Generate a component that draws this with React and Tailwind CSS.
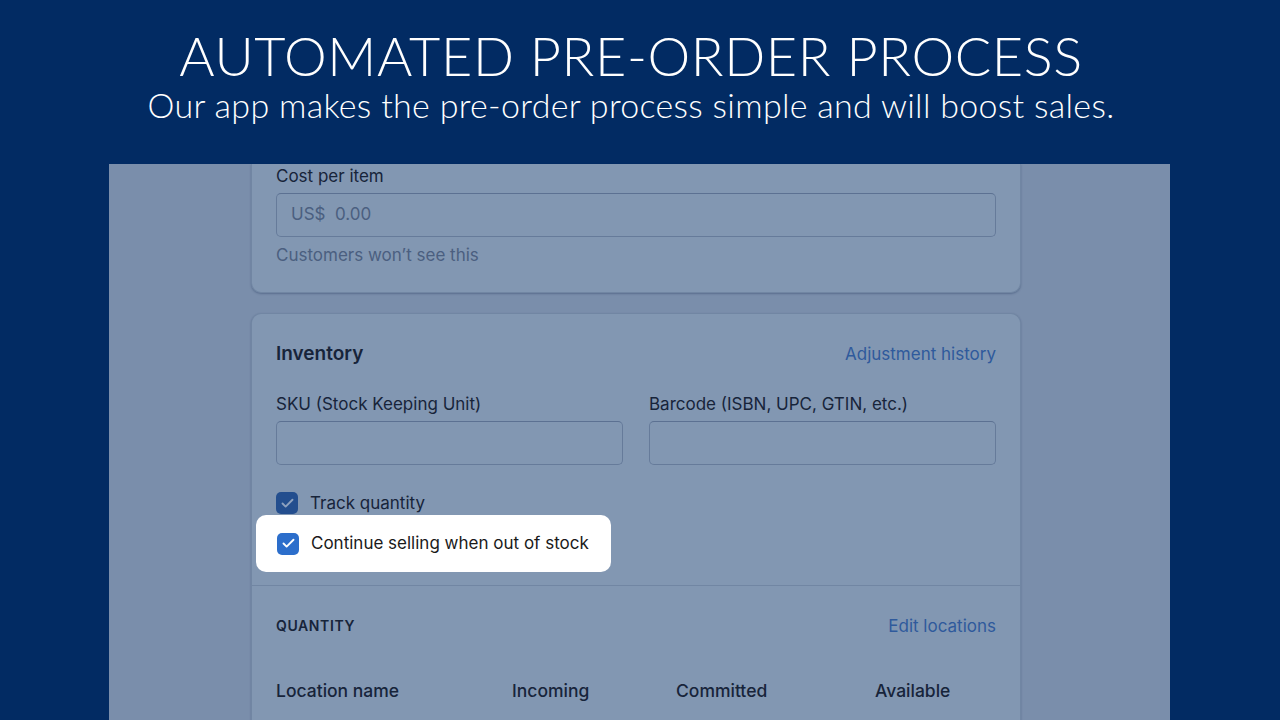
import { Check } from "lucide-react";

const ui = { fontFamily: "Inter, 'Noto Sans', sans-serif" };
const head = { fontFamily: "Lato, 'Open Sans', sans-serif" };

const Box = ({ checked = true, bright = false }) => (
  <span
    className={`w-[22px] h-[22px] rounded-[5px] flex items-center justify-center shrink-0 ${
      bright ? "bg-[#2c6ecb]" : "bg-[#234e8e]"
    }`}
  >
    {checked && <Check className={bright ? "text-white" : "text-[#8ea2bf]"} size={15} strokeWidth={3} />}
  </span>
);

const App = () => {
  return (
    <div className="w-[1280px] h-[720px] bg-[#022b63] overflow-hidden flex flex-col items-center" style={ui}>
      {/* Header */}
      <div className="h-[164px] mr-[18px] flex flex-col items-center text-white font-light" style={head}>
        <h1 className="text-[54px] leading-none mt-[29px] tracking-[0.6px]">AUTOMATED PRE-ORDER PROCESS</h1>
        <p className="text-[34px] leading-none mt-[5px] tracking-[0.3px]">
          Our app makes the pre-order process simple and will boost sales.
        </p>
      </div>

      {/* Screenshot panel */}
      <div className="w-[1061px] ml-[-1px] flex-1 bg-[#7a8eab] flex flex-col items-start pl-[142px] text-[17px]">
        {/* Cost card */}
        <div className="w-[770px] bg-[#8297b2] rounded-b-[10px] border-x border-b border-[#7186a3] shadow-[0_1px_2px_rgba(30,50,90,0.35)] px-[24px] pb-[25px]">
          <div className="leading-[24px] text-[#17243a]">Cost per item</div>
          <div className="mt-[5px] h-[44px] rounded-[5px] border border-[#667b9a] border-t-[#5c7192] flex items-center px-[14px] text-[#4b5f80]">
            US$&nbsp;&nbsp;0.00
          </div>
          <div className="mt-[6px] leading-[24px] text-[#4b5f80]">Customers won’t see this</div>
        </div>

        {/* Inventory card */}
        <div className="mt-[20px] w-[770px] flex-1 bg-[#8297b2] rounded-t-[10px] border-x border-t border-[#7186a3] shadow-[0_1px_2px_rgba(30,50,90,0.35)] text-[#17243a]">
          <div className="px-[24px]">
            <div className="pt-[26px] flex items-center justify-between leading-[28px]">
              <span className="text-[19px] font-semibold">Inventory</span>
              <span className="text-[#2f5a9c]">Adjustment history</span>
            </div>
            <div className="mt-[24px] grid grid-cols-2 gap-[26px]">
              {["SKU (Stock Keeping Unit)", "Barcode (ISBN, UPC, GTIN, etc.)"].map((l) => (
                <div key={l}>
                  <div className="leading-[24px]">{l}</div>
                  <div className="mt-[5px] h-[44px] rounded-[5px] border border-[#667b9a] border-t-[#5c7192]" />
                </div>
              ))}
            </div>
            <div className="mt-[27px] flex items-center gap-[12px] leading-[22px]">
              <Box />
              <span>Track quantity</span>
            </div>
            <div className="mt-[1px] -ml-[20px] w-[355px] h-[57px] bg-white rounded-[10px] flex items-center gap-[12px] pl-[21px] text-[#1a1a1a]">
              <Box bright />
              <span>Continue selling when out of stock</span>
            </div>
          </div>
          <div className="mt-[13px] border-t border-[#7186a3] px-[24px]">
            <div className="pt-[28px] flex items-center justify-between leading-[24px]">
              <span className="text-[14px] font-semibold tracking-[0.6px]">QUANTITY</span>
              <span className="text-[#2f5a9c]">Edit locations</span>
            </div>
            <div className="mt-[41px] flex items-center font-medium text-[17.5px] leading-[24px]">
              <span className="w-[236px]">Location name</span>
              <span className="w-[164px]">Incoming</span>
              <span className="w-[199px]">Committed</span>
              <span>Available</span>
            </div>
          </div>
        </div>
      </div>
    </div>
  );
};

export default App;
